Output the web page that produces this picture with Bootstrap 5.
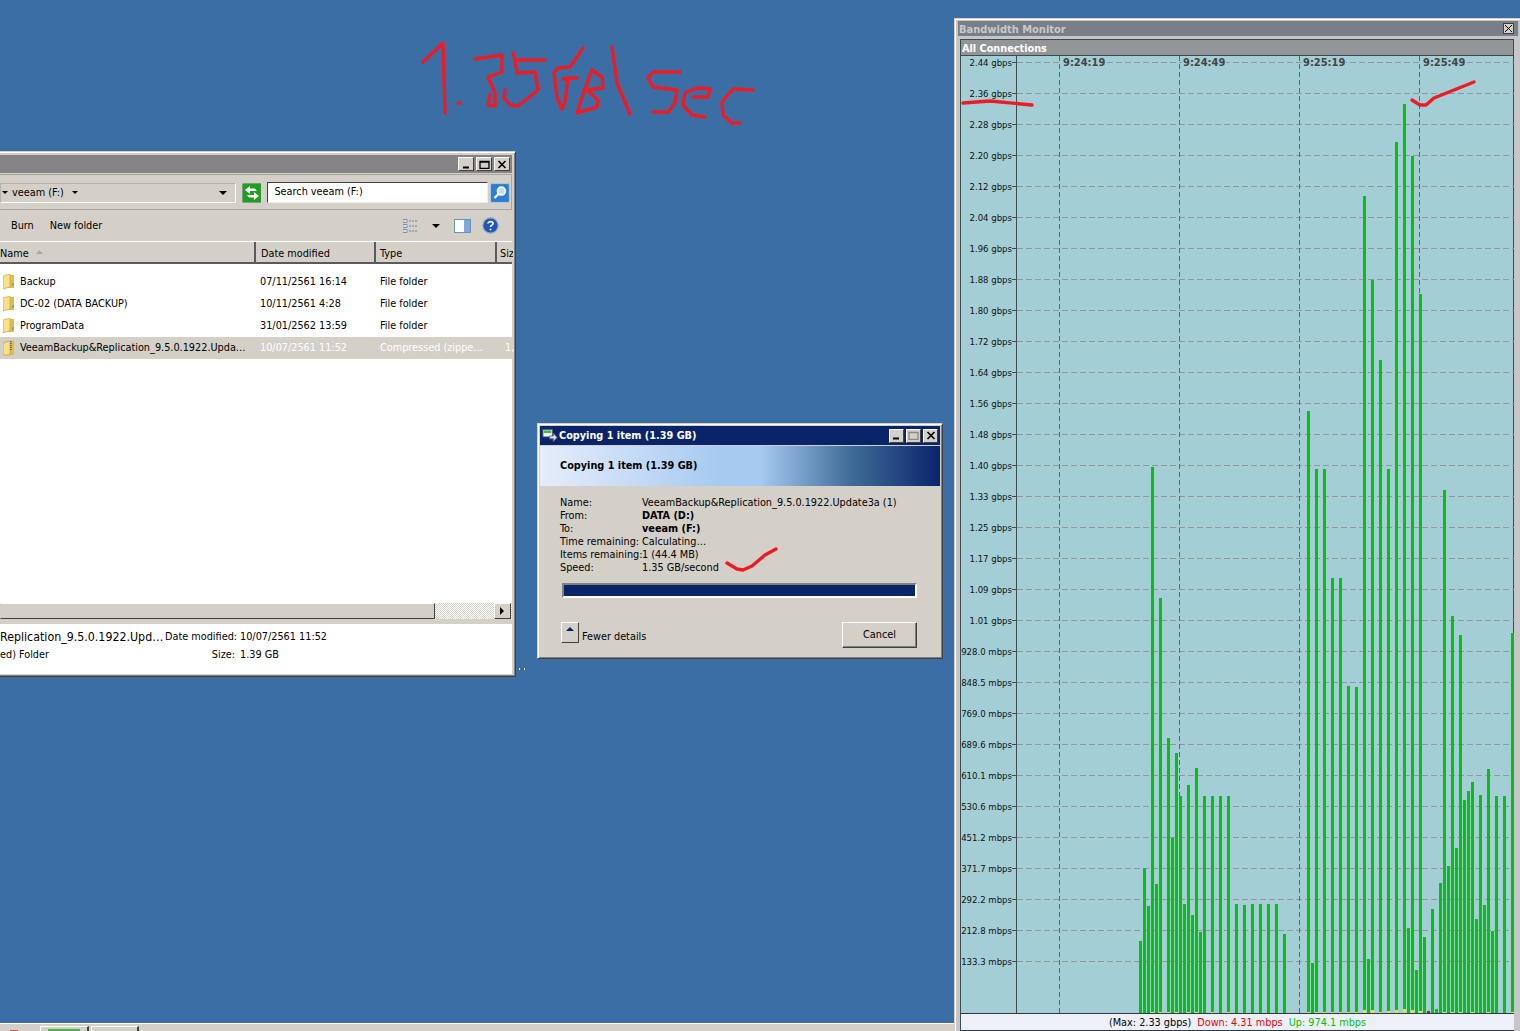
<!DOCTYPE html>
<html lang="en">
<head>
<meta charset="utf-8">
<title>Bandwidth Monitor</title>
<link href="https://cdn.jsdelivr.net/npm/bootstrap@5.3.0/dist/css/bootstrap.min.css" rel="stylesheet">
<style>
html,body{height:100%;margin:0;overflow:hidden}
body{background:#3a6ea5;font-family:"DejaVu Sans Condensed","DejaVu Sans",sans-serif;font-stretch:condensed;font-size:10.8px;line-height:13px;color:#000}
.desk{position:relative;width:1520px;height:1031px;overflow:hidden}
.win{position:absolute;background:#d4d0c8;border:1px solid;border-color:#d4d0c8 #404040 #404040 #d4d0c8;box-shadow:inset 1px 1px #fff,inset -1px -1px #808080}
.capbtn{width:16px;height:14px;background:#d4d0c8;border:1px solid;border-color:#fff #404040 #404040 #fff;display:flex;align-items:center;justify-content:center;flex:none}
.capbtn svg{display:block}
/* explorer */
.exp{left:-4px;top:151px;width:520px;height:526px;padding:3px 3px 2px 3px;display:flex;flex-direction:column}
.exp-cap{height:18px;background:#858386;padding:2px 2px 2px 0;gap:2px;flex:none}
.exp-addr{height:36px;flex:none;border:1px solid #a9a69f;border-left:0;margin-top:1px;padding:6px 1px 5px 0;gap:2px}
.crumb{width:237px;height:20px;border:1px solid;border-color:#b6b3ab #fff #fff #b6b3ab}
.tri{width:0;height:0;border-left:4px solid transparent;border-right:4px solid transparent;border-top:4px solid #000;flex:none}
.tri-s{border-width:3px 3px 0}
.crumb .first{margin:0 4px 0 1px}
.searchbox{width:222px;height:21px;background:#fff;border:1px solid;border-color:#404040 #eee #eee #404040;padding-left:6px;line-height:18px}
.exp-tool{height:31px;flex:none;padding-left:11px;padding-right:13px}
.viewtri{margin:0 14px 0 13px}
.helpic{margin-left:11px}
.exp-head{height:23px;flex:none;border-top:1px solid #fff;border-bottom:2px solid #5a5a5a;background:#d4d0c8}
.hcell{height:100%;border-right:2px solid #5a5a5a;padding-left:5px;line-height:24px;flex:none;white-space:nowrap;overflow:hidden}
.hname{width:256px;padding-left:0}
.hdate{width:120px}
.htype{width:121px;padding-left:4px}
.hsize{width:16px;border:0;padding-left:3px}
.exp-list{background:#fff;flex:1 1 auto;padding-top:7px;min-height:0}
.frow{height:22px;line-height:22px;white-space:nowrap}
.fname{width:260px;padding-left:3px;gap:5px;flex:none}
.fdate{width:120px;flex:none}
.ftype{width:120px;flex:none}
.fsize{margin-left:5px}
.sel{background:#d4d0c8}
.sel .fdate,.sel .ftype,.sel .fsize{color:#fff}
.exp-scroll{height:16px;flex:none;background:repeating-conic-gradient(#d4d0c8 0 25%,#fff 0 50%) 0 0/2px 2px}
.thumb{width:435px;background:#d4d0c8;border:1px solid;border-color:#fff #404040 #404040 #d4d0c8}
.sbtn{width:17px;margin-left:auto;margin-right:1px;background:#d4d0c8;border:1px solid;border-color:#fff #404040 #404040 #fff}
.exp-gap{height:5px;flex:none}
.exp-det{height:50px;flex:none;background:#fff;padding-top:4px}
.drow{height:18px;line-height:18px;white-space:nowrap}
.dname{width:165px;font-size:12.3px;flex:none}
.dname2{font-size:10.8px}
.dlab{width:70px;text-align:right;flex:none}
.dval{padding-left:5px}
.dots{position:absolute;left:519px;top:668px;width:6px;height:2px;border-left:1px solid #fff;border-right:1px solid #fff}
/* copy */
.copy{left:537px;top:423px;width:406px;height:236px;padding:2px 2px}
.copy .capbtn{width:15px}
.copy-cap{height:19px;background:#0a246a;color:#fff;font-weight:700;padding:0 2px;gap:2px;margin-bottom:1px}
.copy-title{margin-left:-1px}
.copy-hero{height:40px;background:linear-gradient(90deg,#e6edfb 0,#a6caf0 45%,#a6caf0 55%,#3f6b98 78%,#0a246a 100%);padding-left:20px;font-weight:700;padding-bottom:2px}
.copy-body{padding:10px 23px 0 20px}
.irow{height:13px;line-height:13px;white-space:nowrap}
.ilab{width:82px;flex:none}
.pbar{height:15px;margin:9px 0 0 2px;width:355px;border:2px solid;border-color:#808080 #fff #fff #808080;background:#0a246a}
.copy-foot{margin-top:24px;padding-left:1px}
.morebtn{width:18px;height:21px;background:#d4d0c8;border:1px solid;border-color:#fff #404040 #404040 #fff;flex:none}
.morebtn i{display:block;width:0;height:0;border-left:4px solid transparent;border-right:4px solid transparent;border-bottom:4px solid #0a246a;margin:4px auto}
.fewer{margin:8px 0 0 3px}
.cancelb{width:75px;height:26px;margin-left:auto;background:#d4d0c8;border:1px solid;border-color:#fff #404040 #404040 #fff;border-radius:0;font-size:10.8px;line-height:22px;padding:0;color:#000;box-shadow:inset -1px -1px #808080}
/* monitor */
.bw{left:954px;top:18px;width:570px;height:1016px;padding:2px 9px 0 3px;background:#c6c6c8;display:flex;flex-direction:column}
.bw-cap{height:15px;background:#7a7e88;color:#c8c8c8;font-weight:700;padding:2px 1px 0;margin-right:-4px;font-size:11px;flex:none}
.bw-x{width:11px;height:11px;background:#d4d0c8;border:1px solid #404040;display:flex;align-items:center;justify-content:center;margin:-2px 3px 0 0}
.bw-sub{height:17px;background:#929699;color:#fff;font-weight:700;margin:3px 0 0 2px;padding-left:1px;border:1px solid #3d4a4e;line-height:17px;flex:none}
.bw-chart{margin-left:2px;flex:none;height:957px;background:#a3ced6;border-left:1px solid #3d4a4e;border-right:1px solid #3d4a4e}
.bw-chart svg{display:block}
.bw-status{height:18px;margin-left:2px;background:#eef0f9;border-top:1px solid #30393c;border-left:1px solid #3d4a4e;border-bottom:1px solid #30393c;justify-content:center;line-height:17px;flex:none;gap:6px}
.t-down{color:#f00000}.t-up{color:#00c000}
.ylab{font:9.5px "DejaVu Sans Condensed","DejaVu Sans",sans-serif;font-stretch:condensed;fill:#111}
.tlab{font:700 11px "DejaVu Sans Condensed","DejaVu Sans",sans-serif;font-stretch:condensed;fill:#444}
/* taskbar */
.tbar{position:absolute;left:0;top:1023px;width:954px;height:8px;background:#d4d0c8;border-top:1px solid #fff;padding-left:40px;gap:2px}
.tbtn{height:7px;margin-top:2px;border-top:1px solid #fff;border-left:1px solid #fff;border-right:2px solid #404040}
.tb1{width:49px}.tb2{width:48px}
.tbar-g{height:4px;width:32px;background:#4cb34c;margin:2px 0 0 7px}
.redmark{position:absolute;left:10px;top:1030px;width:8px;height:1px;background:#e05050}
.ink{position:absolute;left:0;top:0;pointer-events:none}
</style>
</head>
<body>
<div class="desk">

  <div class="win exp">
    <div class="exp-cap d-flex justify-content-end">
      <span class="capbtn"><svg width="9" height="9"><path d="M1 7.5H7" stroke="#000" stroke-width="2"/></svg></span>
      <span class="capbtn"><svg width="11" height="9"><path d="M1 1.5H10V8.5H1Z M1 2H10" fill="none" stroke="#000" stroke-width="1.3"/></svg></span>
      <span class="capbtn"><svg width="10" height="9"><path d="M1.5 1L8.5 8M8.5 1L1.5 8" stroke="#000" stroke-width="1.6"/></svg></span>
    </div>
    <div class="exp-addr d-flex align-items-center">
      <div class="crumb d-flex align-items-center">
        <span class="tri tri-s first"></span><span>veeam (F:)</span><span class="tri tri-s ms-2"></span><span class="tri ms-auto me-2"></span>
      </div>
      <svg width="20" height="20" viewBox="0 0 20 20" class="ms-1"><rect x=".5" y=".5" width="19" height="19" rx="1" fill="#1f9e1f" stroke="#7a9a7a"/><path d="M3 7L8 3V5.5H13L15 8H8V11Z" fill="#fff"/><path d="M17 13L12 17V14.5H7L5 12H12V9Z" fill="#fff"/></svg>
      <div class="searchbox ms-1">Search veeam (F:)</div>
      <svg width="20" height="20" viewBox="0 0 20 20"><rect x=".5" y=".5" width="19" height="19" rx="1.5" fill="#2f7fd0" stroke="#b0c8e0"/><circle cx="11.5" cy="8" r="4" fill="#bfe0ff" stroke="#fff" stroke-width="1.6"/><path d="M8.5 11L4.5 15" stroke="#fff" stroke-width="2.4"/></svg>
    </div>
    <div class="exp-tool d-flex align-items-center">
      <span class="me-3">Burn</span><span>New folder</span>
      <svg class="ms-auto" width="16" height="14" viewBox="0 0 16 14"><path d="M0 .5h4v3H0zM0 5.5h4v3H0zM0 10.5h4v3H0z" fill="#fff" stroke="#5a7fb0" stroke-width=".8"/><path d="M1.5 2h1M1.5 7h1M1.5 12h1" stroke="#c04040"/><path d="M6 2h9M6 7h9M6 12h9" stroke="#6f80a8" stroke-dasharray="2 1"/></svg>
      <span class="tri viewtri"></span>
      <svg width="17" height="14" viewBox="0 0 17 14"><rect x=".5" y=".5" width="16" height="13" fill="#fff" stroke="#6f93b8"/><rect x="10" y="1" width="6" height="12" fill="#7fa9d6"/></svg>
      <svg class="helpic" width="17" height="17" viewBox="0 0 17 17"><circle cx="8.5" cy="8.5" r="7.7" fill="#1f55c0" stroke="#a9a6b0" stroke-width="1.2"/><path d="M6 6.5C6 4 11 4 11 6.5C11 8.5 8.5 8 8.5 10" stroke="#fff" stroke-width="1.7" fill="none"/><circle cx="8.5" cy="12.5" r="1" fill="#fff"/></svg>
    </div>
    <div class="exp-head d-flex">
      <div class="hcell hname">Name <svg width="7" height="5" class="ms-1 mb-1"><path d="M0 4L3.5 0L7 4Z" fill="#a8a8a8"/></svg></div>
      <div class="hcell hdate">Date modified</div>
      <div class="hcell htype">Type</div>
      <div class="hcell hsize">Siz</div>
    </div>
    <div class="exp-list">
      <div class="frow d-flex"><div class="fname d-flex align-items-center"><svg width="12" height="16" viewBox="0 0 12 16"><path d="M7 1H11V14H3" fill="#e3bb4a"/><path d="M0 2L7 0V13L0 15Z" fill="#f9e08a" stroke="#c8a030" stroke-width=".6"/><path d="M10 9V12" stroke="#5b9bd8" stroke-width="1.4"/></svg><span>Backup</span></div><div class="fdate">07/11/2561 16:14</div><div class="ftype">File folder</div></div>
      <div class="frow d-flex"><div class="fname d-flex align-items-center"><svg width="12" height="16" viewBox="0 0 12 16"><path d="M7 1H11V14H3" fill="#e3bb4a"/><path d="M0 2L7 0V13L0 15Z" fill="#f9e08a" stroke="#c8a030" stroke-width=".6"/><path d="M10 9V12" stroke="#5b9bd8" stroke-width="1.4"/></svg><span>DC-02 (DATA BACKUP)</span></div><div class="fdate">10/11/2561 4:28</div><div class="ftype">File folder</div></div>
      <div class="frow d-flex"><div class="fname d-flex align-items-center"><svg width="12" height="16" viewBox="0 0 12 16"><path d="M7 1H11V14H3" fill="#e3bb4a"/><path d="M0 2L7 0V13L0 15Z" fill="#f9e08a" stroke="#c8a030" stroke-width=".6"/><path d="M10 9V12" stroke="#5b9bd8" stroke-width="1.4"/></svg><span>ProgramData</span></div><div class="fdate">31/01/2562 13:59</div><div class="ftype">File folder</div></div>
      <div class="frow sel d-flex"><div class="fname d-flex align-items-center"><svg width="12" height="16" viewBox="0 0 12 16"><path d="M7 1H11V15H3" fill="#e3bb4a"/><path d="M0 3L7 1V15L0 15Z" fill="#f9e08a" stroke="#b09030" stroke-width=".6"/><path d="M8 1V10" stroke="#55607a" stroke-width="1.6" stroke-dasharray="1 1"/></svg><span>VeeamBackup&amp;Replication_9.5.0.1922.Upda…</span></div><div class="fdate">10/07/2561 11:52</div><div class="ftype">Compressed (zippe…</div><div class="fsize">1,</div></div>
    </div>
    <div class="exp-scroll d-flex">
      <div class="thumb"></div>
      <div class="sbtn d-flex align-items-center justify-content-center"><svg width="5" height="8"><path d="M0 0L4 4L0 8Z"/></svg></div>
    </div>
    <div class="exp-gap"></div>
    <div class="exp-det">
      <div class="drow d-flex"><div class="dname">Replication_9.5.0.1922.Upd…</div><div class="dlab">Date modified:</div><div class="dval">10/07/2561 11:52</div></div>
      <div class="drow d-flex"><div class="dname dname2">ed) Folder</div><div class="dlab">Size:</div><div class="dval">1.39 GB</div></div>
    </div>
  </div>
  <div class="dots"></div>

  <div class="win copy">
    <div class="copy-cap d-flex align-items-center">
      <svg width="16" height="15" viewBox="0 0 17 15"><rect x="1" y="1" width="10" height="8" fill="#fff" stroke="#557"/><rect x="2" y="2" width="8" height="3" fill="#35c04a"/><path d="M8 8H12V5L16 9.5L12 14V11H8Z" fill="#dfe4ea" stroke="#667"/></svg>
      <span class="copy-title me-auto">Copying 1 item (1.39 GB)</span>
      <span class="capbtn"><svg width="9" height="9"><path d="M1 7.5H7" stroke="#000" stroke-width="2"/></svg></span>
      <span class="capbtn"><svg width="11" height="9"><path d="M1 1.5H10V8.5H1Z" fill="none" stroke="#888" stroke-width="1.3"/></svg></span>
      <span class="capbtn"><svg width="10" height="9"><path d="M1.5 1L8.5 8M8.5 1L1.5 8" stroke="#000" stroke-width="1.6"/></svg></span>
    </div>
    <div class="copy-hero d-flex align-items-center">Copying 1 item (1.39 GB)</div>
    <div class="copy-body">
      <div class="irow d-flex"><div class="ilab">Name:</div><div>VeeamBackup&amp;Replication_9.5.0.1922.Update3a (1)</div></div>
      <div class="irow d-flex"><div class="ilab">From:</div><div class="fw-bold">DATA (D:)</div></div>
      <div class="irow d-flex"><div class="ilab">To:</div><div class="fw-bold">veeam (F:)</div></div>
      <div class="irow d-flex"><div class="ilab">Time remaining:</div><div>Calculating…</div></div>
      <div class="irow d-flex"><div class="ilab">Items remaining:</div><div>1 (44.4 MB)</div></div>
      <div class="irow d-flex"><div class="ilab">Speed:</div><div>1.35 GB/second</div></div>
      <div class="pbar"></div>
      <div class="copy-foot d-flex">
        <div class="morebtn"><i></i></div>
        <div class="fewer">Fewer details</div>
        <button type="button" class="btn cancelb">Cancel</button>
      </div>
    </div>
  </div>

  <div class="win bw">
    <div class="bw-cap d-flex align-items-center justify-content-between">
      <span>Bandwidth Monitor</span>
      <span class="bw-x"><svg width="7" height="7"><path d="M0 0L7 7M7 0L0 7" stroke="#000"/></svg></span>
    </div>
    <div class="bw-sub">All Connections</div>
    <div class="bw-chart">
      <svg width="553" height="957" viewBox="961 56 553 957">
        <path fill="none" stroke="#8f999d" stroke-dasharray="6 3" d="M1017 62.5H1514M1017 93.5H1514M1017 124.5H1514M1017 155.5H1514M1017 186.5H1514M1017 217.5H1514M1017 248.5H1514M1017 279.5H1514M1017 310.5H1514M1017 341.5H1514M1017 372.5H1514M1017 403.5H1514M1017 434.5H1514M1017 465.5H1514M1017 496.5H1514M1017 527.5H1514M1017 558.5H1514M1017 589.5H1514M1017 620.5H1514M1017 651.5H1514M1017 682.5H1514M1017 713.5H1514M1017 744.5H1514M1017 775.5H1514M1017 806.5H1514M1017 837.5H1514M1017 868.5H1514M1017 899.5H1514M1017 930.5H1514M1017 961.5H1514"/>
        <path fill="none" stroke="#3d4a4e" d="M1016.5 56V1013M1012 62.5H1017M1012 93.5H1017M1012 124.5H1017M1012 155.5H1017M1012 186.5H1017M1012 217.5H1017M1012 248.5H1017M1012 279.5H1017M1012 310.5H1017M1012 341.5H1017M1012 372.5H1017M1012 403.5H1017M1012 434.5H1017M1012 465.5H1017M1012 496.5H1017M1012 527.5H1017M1012 558.5H1017M1012 589.5H1017M1012 620.5H1017M1012 651.5H1017M1012 682.5H1017M1012 713.5H1017M1012 744.5H1017M1012 775.5H1017M1012 806.5H1017M1012 837.5H1017M1012 868.5H1017M1012 899.5H1017M1012 930.5H1017M1012 961.5H1017"/>
        <path fill="none" stroke="#5b6a72" stroke-dasharray="5 3" d="M1059.5 56V1013M1179.5 56V1013M1299.5 56V1013M1419.5 56V1013"/>
        <path fill="none" stroke="#0abf14" stroke-width="3" d="M1140.5 941V1013M1144.5 868V1013M1148.5 906V1013M1152.5 467V1013M1156.5 884V1013M1160.5 598V1013M1168.5 738V1013M1172.5 838V1013M1176.5 753V1013M1180.5 796V1013M1184.5 904V1013M1188.5 785V1013M1192.5 915V1013M1196.5 768V1013M1200.5 932V1013M1204.5 796V1013M1212.5 796V1013M1220.5 796V1013M1228.5 796V1013M1236.5 904V1013M1244.5 905V1013M1252.5 904V1013M1260.5 904V1013M1268.5 904V1013M1276.5 904V1013M1284.5 934V1013M1308.5 411V1013M1312.5 963V1013M1316.5 469V1013M1324.5 469V1013M1332.5 578V1013M1340.5 578V1013M1348.5 686V1013M1356.5 687V1013M1364.5 196V1013M1368.5 959V1013M1372.5 280V1013M1380.5 360V1013M1388.5 469V1013M1396.5 142V1013M1404.5 104V1013M1408.5 928V1013M1412.5 156V1013M1416.5 970V1013M1420.5 294V1013M1424.5 937V1013M1432.5 909V1013M1436.5 1009V1013M1440.5 883V1013M1444.5 490V1013M1448.5 866V1013M1452.5 616V1013M1456.5 848V1013M1460.5 635V1013M1464.5 800V1013M1468.5 791V1013M1472.5 782V1013M1476.5 919V1013M1480.5 795V1013M1484.5 905V1013M1488.5 769V1013M1492.5 931V1013M1496.5 796V1013M1504.5 796V1013M1512.5 633V1013"/>
        <path fill="none" stroke="#f0e614" stroke-width="3" d="M1152.5 1012V1013M1160.5 1012V1013M1168.5 1012V1013M1176.5 1012V1013M1188.5 1012V1013M1196.5 1012V1013M1212.5 1012V1013M1228.5 1012V1013M1308.5 1012V1013M1316.5 1012V1013M1324.5 1012V1013M1332.5 1012V1013M1340.5 1012V1013M1348.5 1012V1013M1356.5 1012V1013M1364.5 1010V1013M1372.5 1010V1013M1380.5 1012V1013M1388.5 1011V1013M1396.5 1010V1013M1404.5 1009V1013M1412.5 1010V1013M1420.5 1011V1013M1444.5 1012V1013M1452.5 1012V1013M1460.5 1012V1013M1472.5 1012V1013M1488.5 1012V1013M1512.5 1012V1013"/>
        <path fill="none" stroke="#d01010" stroke-width="3" d="M1428.5 1011V1013"/>
        <g class="ylab" text-anchor="end">
          <text x="1012" y="66">2.44 gbps</text><text x="1012" y="97">2.36 gbps</text><text x="1012" y="128">2.28 gbps</text><text x="1012" y="159">2.20 gbps</text><text x="1012" y="190">2.12 gbps</text><text x="1012" y="221">2.04 gbps</text><text x="1012" y="252">1.96 gbps</text><text x="1012" y="283">1.88 gbps</text><text x="1012" y="314">1.80 gbps</text><text x="1012" y="345">1.72 gbps</text><text x="1012" y="376">1.64 gbps</text><text x="1012" y="407">1.56 gbps</text><text x="1012" y="438">1.48 gbps</text><text x="1012" y="469">1.40 gbps</text><text x="1012" y="500">1.33 gbps</text><text x="1012" y="531">1.25 gbps</text><text x="1012" y="562">1.17 gbps</text><text x="1012" y="593">1.09 gbps</text><text x="1012" y="624">1.01 gbps</text><text x="1012" y="655">928.0 mbps</text><text x="1012" y="686">848.5 mbps</text><text x="1012" y="717">769.0 mbps</text><text x="1012" y="748">689.6 mbps</text><text x="1012" y="779">610.1 mbps</text><text x="1012" y="810">530.6 mbps</text><text x="1012" y="841">451.2 mbps</text><text x="1012" y="872">371.7 mbps</text><text x="1012" y="903">292.2 mbps</text><text x="1012" y="934">212.8 mbps</text><text x="1012" y="965">133.3 mbps</text>
        </g>
        <path fill="#a3ced6" d="M1062 57h44v11h-44zM1182 57h44v11h-44zM1302 57h44v11h-44zM1422 57h44v11h-44z"/>
        <g class="tlab"><text x="1063" y="66">9:24:19</text><text x="1183" y="66">9:24:49</text><text x="1303" y="66">9:25:19</text><text x="1423" y="66">9:25:49</text></g>
      </svg>
    </div>
    <div class="bw-status d-flex">
      <span>(Max: 2.33 gbps)</span><span class="t-down">Down: 4.31 mbps</span><span class="t-up">Up: 974.1 mbps</span>
    </div>
  </div>

  <div class="tbar d-flex">
    <div class="tbtn tb1"><div class="tbar-g"></div></div>
    <div class="tbtn tb2"></div>
  </div>
  <div class="redmark"></div>

  <svg class="ink" width="1520" height="1031" viewBox="0 0 1520 1031" fill="none" stroke="#ed1c24" stroke-width="3.4" stroke-linejoin="round" stroke-linecap="round">
    <path d="M423 62L443 43L445 113"/><path d="M458 103H460"/>
    <path d="M475 59L502 55L502 72L488 77L495 93L495 106L488 105L490 95"/>
    <path d="M513 53L515 60H545M515 60L517 73L535 72L538 90L518 106L510 105L504 98L505 90"/>
    <path d="M583 48L570 67L558 68L554 73L557 97L562 109L565 102L568 78L577 78M563 79L573 78"/>
    <path d="M592 70L582 97L577 113L597 107L598 100L587 90L603 88L602 77L592 70"/>
    <path d="M612 47L617 83L630 114"/>
    <path d="M680 72H653L648 78L653 87L677 90L675 103L668 112L653 112"/>
    <path d="M693 97H708L710 89L697 88L685 93L683 105L692 115L705 117"/>
    <path d="M753 90L733 89L722 102L723 115L732 123L740 123"/>
    <path d="M727 563L737 569L743 570L752 566L765 555L776 549"/>
    <path d="M963 103L990 101L1032 105"/>
    <path d="M1412 100L1420 105L1426 105L1434 98L1474 82"/>
  </svg>
</div>
<script src="https://cdn.jsdelivr.net/npm/bootstrap@5.3.0/dist/js/bootstrap.bundle.min.js"></script>
</body>
</html>
